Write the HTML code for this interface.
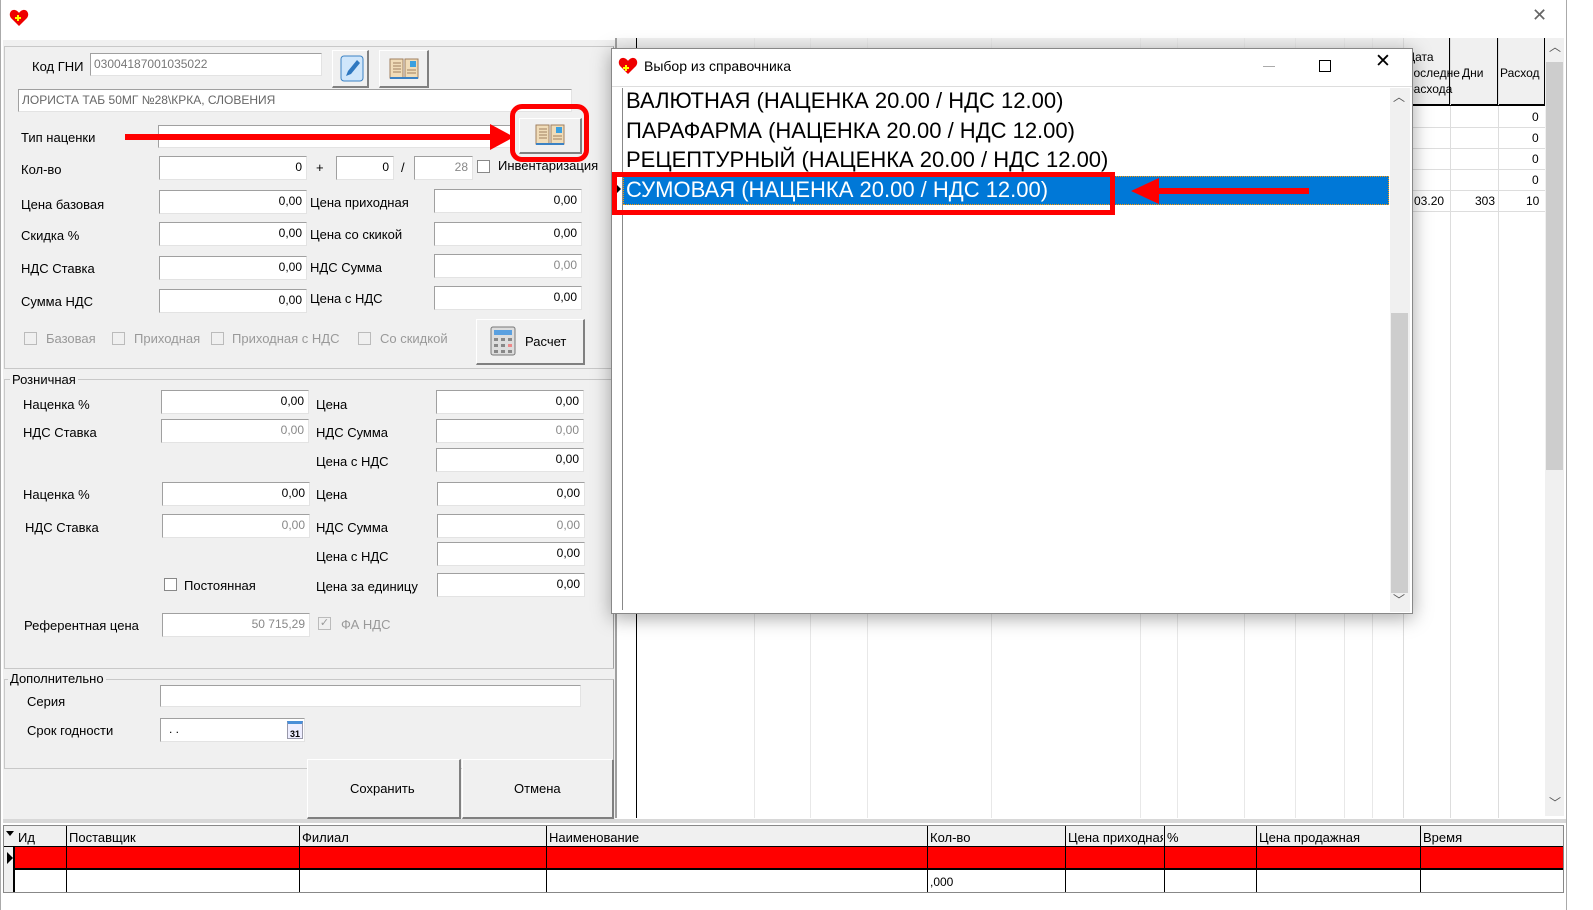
<!DOCTYPE html>
<html><head><meta charset="utf-8">
<style>
*{box-sizing:border-box;margin:0;padding:0}
body{width:1593px;height:910px;position:relative;background:#fff;font-family:"Liberation Sans",sans-serif;font-size:13px;color:#000;overflow:hidden}
.a{position:absolute}
.l{position:absolute;font-size:13px;white-space:nowrap;line-height:15px}
.i{position:absolute;background:#fff;border-top:1px solid #a0a0a0;border-left:1px solid #a0a0a0;border-right:1px solid #e3e3e3;border-bottom:1px solid #e3e3e3;text-align:right;padding-right:4px;font-size:12px;line-height:20px;white-space:nowrap;overflow:hidden}
.g{color:#888}
.cb{position:absolute;width:13px;height:13px;border:1px solid #888;background:#fff}
.cbd{border-color:#bbb;background:#f0f0f0}
.btn{position:absolute;background:#f0f0f0;border-top:1px solid #fff;border-left:1px solid #fff;border-right:2px solid #808080;border-bottom:2px solid #808080}
.vl{position:absolute;width:1px;background:#e8e8e8}
.hd{position:absolute;border-right:1px solid #000;border-bottom:1px solid #000;background:#f0f0f0}
</style></head><body>
<!-- top bar -->
<svg class="a" style="left:9px;top:9px" width="20" height="18" viewBox="0 0 20 18"><path d="M10 17 L2 9 C-1 5 2 0 6 1 C8 1.5 9.5 3 10 4 C10.5 3 12 1.5 14 1 C18 0 21 5 18 9 Z" fill="#e00"/><path d="M6 9h6M9 6v6" stroke="#ff0" stroke-width="2"/></svg>
<div class="l" style="left:1532px;top:8px;font-size:18px;color:#666">✕</div>
<div class="a" style="left:0;top:0;width:1px;height:910px;background:#aaa"></div>
<div class="a" style="left:1566px;top:0;width:1px;height:910px;background:#aaa"></div>

<!-- left panel -->
<div class="a" style="left:3px;top:40px;width:612px;height:782px;background:#f0f0f0"></div>
<div class="a" style="left:4px;top:46px;width:610px;height:323px;border:1px solid #c8c8c8;border-right:1px solid #a0a0a0"></div>
<div class="l" style="left:32px;top:59px">Код ГНИ</div>
<div class="i" style="left:90px;top:53px;width:232px;height:23px;text-align:left;padding-left:3px;color:#777;line-height:21px">03004187001035022</div>
<div class="btn" style="left:332px;top:50px;width:37px;height:38px"></div>
<svg class="a" style="left:340px;top:55px" width="24" height="27" viewBox="0 0 24 27"><rect x="1" y="1" width="22" height="25" rx="3" fill="#cfe6fb" stroke="#3b82c4"/><path d="M6 21 L8 16 L17 5 L20 8 L11 19 Z" fill="#2f78c0"/></svg>
<div class="btn" style="left:379px;top:50px;width:50px;height:38px"></div>
<svg class="a" style="left:388px;top:56px" width="32" height="24" viewBox="0 0 32 24"><path d="M2 3h13v19H2z" fill="#f0dcb8" stroke="#a08060"/><path d="M17 3h13v19H17z" fill="#f0dcb8" stroke="#a08060"/><rect x="22" y="5" width="6" height="6" fill="#3aa0e0"/><path d="M5 7h8M5 10h8M5 13h8M5 16h8M19 14h9M19 17h9" stroke="#a08060"/><path d="M2 22h28" stroke="#3b82c4" stroke-width="2"/></svg>
<div class="i" style="left:18px;top:89px;width:554px;height:23px;text-align:left;padding-left:3px;color:#666;line-height:20px">ЛОРИСТА ТАБ 50МГ №28\КРКА, СЛОВЕНИЯ</div>
<div class="l" style="left:21px;top:130px">Тип наценки</div>
<div class="i" style="left:158px;top:125px;width:357px;height:23px"></div>
<div class="btn" style="left:519px;top:118px;width:63px;height:36px"></div>
<svg class="a" style="left:534px;top:122px" width="32" height="26" viewBox="0 0 32 26"><path d="M2 3h13v19H2z" fill="#f0dcb8" stroke="#a08060"/><path d="M17 3h13v19H17z" fill="#f0dcb8" stroke="#a08060"/><rect x="22" y="5" width="6" height="6" fill="#3aa0e0"/><path d="M5 7h8M5 10h8M5 13h8M5 16h8M19 14h9M19 17h9" stroke="#a08060"/><path d="M2 22h28" stroke="#3b82c4" stroke-width="2"/></svg>
<div class="a" style="left:510px;top:104px;width:79px;height:58px;border:5px solid #f00;border-radius:12px"></div>
<div class="a" style="left:125px;top:134px;width:370px;height:6px;background:#f00"></div>
<svg class="a" style="left:490px;top:124px" width="24" height="26"><path d="M0 0 L24 13 L0 26Z" fill="#f00"/></svg>

<div class="l" style="left:21px;top:162px">Кол-во</div>
<div class="i" style="left:159px;top:156px;width:148px;height:24px">0</div>
<div class="l" style="left:316px;top:160px">+</div>
<div class="i" style="left:336px;top:156px;width:58px;height:24px">0</div>
<div class="l" style="left:401px;top:160px">/</div>
<div class="i g" style="left:414px;top:156px;width:59px;height:24px">28</div>
<div class="cb" style="left:477px;top:160px"></div>
<div class="l" style="left:498px;top:158px">Инвентаризация</div>

<div class="l" style="left:21px;top:197px">Цена базовая</div>
<div class="i" style="left:159px;top:190px;width:148px;height:24px">0,00</div>
<div class="l" style="left:310px;top:195px">Цена приходная</div>
<div class="i" style="left:434px;top:189px;width:148px;height:24px">0,00</div>
<div class="l" style="left:21px;top:228px">Скидка %</div>
<div class="i" style="left:159px;top:222px;width:148px;height:24px">0,00</div>
<div class="l" style="left:310px;top:227px">Цена со скикой</div>
<div class="i" style="left:434px;top:222px;width:148px;height:24px">0,00</div>
<div class="l" style="left:21px;top:261px">НДС Ставка</div>
<div class="i" style="left:159px;top:256px;width:148px;height:24px">0,00</div>
<div class="l" style="left:310px;top:260px">НДС Сумма</div>
<div class="i g" style="left:434px;top:254px;width:148px;height:24px">0,00</div>
<div class="l" style="left:21px;top:294px">Сумма НДС</div>
<div class="i" style="left:159px;top:289px;width:148px;height:24px">0,00</div>
<div class="l" style="left:310px;top:291px">Цена с НДС</div>
<div class="i" style="left:434px;top:286px;width:148px;height:24px">0,00</div>

<div class="cb cbd" style="left:24px;top:332px"></div><div class="l g" style="left:46px;top:331px;color:#999">Базовая</div>
<div class="cb cbd" style="left:112px;top:332px"></div><div class="l" style="left:134px;top:331px;color:#999">Приходная</div>
<div class="cb cbd" style="left:211px;top:332px"></div><div class="l" style="left:232px;top:331px;color:#999">Приходная с НДС</div>
<div class="cb cbd" style="left:358px;top:332px"></div><div class="l" style="left:380px;top:331px;color:#999">Со скидкой</div>
<div class="btn" style="left:476px;top:319px;width:109px;height:46px"></div>
<svg class="a" style="left:490px;top:326px" width="26" height="30"><rect x="1" y="1" width="24" height="28" rx="2" fill="#ddd" stroke="#777"/><rect x="4" y="4" width="18" height="5" fill="#5aa0e0"/><g fill="#888"><rect x="4" y="12" width="4" height="3"/><rect x="11" y="12" width="4" height="3"/><rect x="18" y="12" width="4" height="3"/><rect x="4" y="18" width="4" height="3"/><rect x="11" y="18" width="4" height="3"/><rect x="18" y="18" width="4" height="3" fill="#e88"/><rect x="4" y="24" width="4" height="3"/><rect x="11" y="24" width="4" height="3"/><rect x="18" y="24" width="4" height="3"/></g></svg>
<div class="l" style="left:525px;top:334px">Расчет</div>

<div class="a" style="left:4px;top:379px;width:610px;height:290px;border:1px solid #c8c8c8;border-right:1px solid #a0a0a0"></div>
<div class="l" style="left:10px;top:372px;background:#f0f0f0;padding:0 2px">Розничная</div>
<div class="l" style="left:23px;top:397px">Наценка %</div><div class="i" style="left:161px;top:390px;width:148px;height:24px">0,00</div>
<div class="l" style="left:316px;top:397px">Цена</div><div class="i" style="left:436px;top:390px;width:148px;height:24px">0,00</div>
<div class="l" style="left:23px;top:425px">НДС Ставка</div><div class="i g" style="left:161px;top:419px;width:148px;height:24px">0,00</div>
<div class="l" style="left:316px;top:425px">НДС Сумма</div><div class="i g" style="left:436px;top:419px;width:148px;height:24px">0,00</div>
<div class="l" style="left:316px;top:454px">Цена с НДС</div><div class="i" style="left:436px;top:448px;width:148px;height:24px">0,00</div>
<div class="l" style="left:23px;top:487px">Наценка %</div><div class="i" style="left:162px;top:482px;width:148px;height:24px">0,00</div>
<div class="l" style="left:316px;top:487px">Цена</div><div class="i" style="left:437px;top:482px;width:148px;height:24px">0,00</div>
<div class="l" style="left:25px;top:520px">НДС Ставка</div><div class="i g" style="left:162px;top:514px;width:148px;height:24px">0,00</div>
<div class="l" style="left:316px;top:520px">НДС Сумма</div><div class="i g" style="left:437px;top:514px;width:148px;height:24px">0,00</div>
<div class="l" style="left:316px;top:549px">Цена с НДС</div><div class="i" style="left:437px;top:542px;width:148px;height:24px">0,00</div>
<div class="cb" style="left:164px;top:578px"></div><div class="l" style="left:184px;top:578px">Постоянная</div>
<div class="l" style="left:316px;top:579px">Цена за единицу</div><div class="i" style="left:437px;top:573px;width:148px;height:24px">0,00</div>
<div class="l" style="left:24px;top:618px">Референтная цена</div><div class="i g" style="left:162px;top:613px;width:148px;height:24px">50 715,29</div>
<div class="cb cbd" style="left:318px;top:617px;font-size:11px;line-height:11px;color:#999;text-align:center">✓</div><div class="l" style="left:341px;top:617px;color:#999">ФА НДС</div>

<div class="a" style="left:4px;top:679px;width:610px;height:90px;border:1px solid #c8c8c8;border-right:1px solid #a0a0a0"></div>
<div class="l" style="left:8px;top:671px;background:#f0f0f0;padding:0 2px">Дополнительно</div>
<div class="l" style="left:27px;top:694px">Серия</div><div class="i" style="left:160px;top:685px;width:421px;height:22px"></div>
<div class="l" style="left:27px;top:723px">Срок годности</div><div class="i" style="left:160px;top:718px;width:145px;height:24px;text-align:left;padding-left:8px">. .</div>
<div class="a" style="left:287px;top:721px;width:16px;height:18px;background:#eef;border:1px solid #99a;font-size:9px;font-weight:bold;text-align:center;line-height:20px;border-top:3px solid #4a8fd8">31</div>
<div class="btn" style="left:307px;top:759px;width:154px;height:60px"></div>
<div class="l" style="left:350px;top:781px">Сохранить</div>
<div class="btn" style="left:462px;top:759px;width:152px;height:60px"></div>
<div class="l" style="left:514px;top:781px">Отмена</div>
<div class="a" style="left:3px;top:819px;width:1563px;height:4px;background:#d8d8d8"></div>

<!-- right grid -->
<div class="a" style="left:615px;top:38px;width:2px;height:780px;background:#a0a0a0"></div>
<div class="a" style="left:617px;top:38px;width:928px;height:67px;background:#f0f0f0;border-bottom:1px solid #000"></div>
<div class="vl" style="left:636px;top:38px;height:780px;background:#000"></div>
<div class="vl" style="left:754px;top:38px;height:780px"></div><div class="vl" style="left:810px;top:38px;height:780px"></div><div class="vl" style="left:867px;top:38px;height:780px"></div><div class="vl" style="left:991px;top:38px;height:780px"></div><div class="vl" style="left:1140px;top:38px;height:780px"></div><div class="vl" style="left:1177px;top:38px;height:780px"></div><div class="vl" style="left:1244px;top:38px;height:780px"></div><div class="vl" style="left:1295px;top:38px;height:780px"></div><div class="vl" style="left:1344px;top:38px;height:780px"></div><div class="vl" style="left:1372px;top:38px;height:780px"></div>
<div class="vl" style="left:1403px;top:38px;height:780px;background:#ddd"></div><div class="vl" style="left:1450px;top:38px;height:780px;background:#ddd"></div><div class="vl" style="left:1498px;top:38px;height:780px;background:#ddd"></div>
<div class="a" style="left:1403px;top:38px;width:142px;height:68px;border-bottom:1px solid #000"></div>
<div class="vl" style="left:1449px;top:38px;height:68px;background:#000"></div><div class="vl" style="left:1497px;top:38px;height:68px;background:#000"></div><div class="vl" style="left:1544px;top:38px;height:68px;background:#000"></div>
<div class="l" style="left:1407px;top:49px;font-size:12px;line-height:16px">Дата<br>последне<br>расхода</div>
<div class="l" style="left:1462px;top:66px;font-size:12px">Дни</div>
<div class="l" style="left:1500px;top:66px;font-size:12px">Расход</div>
<div class="a" style="left:1403px;top:127px;width:142px;height:1px;background:#ddd"></div>
<div class="a" style="left:1403px;top:148px;width:142px;height:1px;background:#ddd"></div>
<div class="a" style="left:1403px;top:169px;width:142px;height:1px;background:#ddd"></div>
<div class="a" style="left:1403px;top:190px;width:142px;height:1px;background:#ddd"></div>
<div class="a" style="left:1403px;top:211px;width:142px;height:1px;background:#ddd"></div>
<div class="l" style="left:1532px;top:110px;font-size:12px">0</div>
<div class="l" style="left:1532px;top:131px;font-size:12px">0</div>
<div class="l" style="left:1532px;top:152px;font-size:12px">0</div>
<div class="l" style="left:1532px;top:173px;font-size:12px">0</div>
<div class="l" style="left:1404px;top:194px;font-size:12px">3.03.20</div>
<div class="l" style="left:1475px;top:194px;font-size:12px">303</div>
<div class="l" style="left:1526px;top:194px;font-size:12px">10</div>
<div class="a" style="left:1545px;top:38px;width:19px;height:778px;background:#f0f0f0"></div>
<div class="a" style="left:1546px;top:62px;width:17px;height:408px;background:#cdcdcd"></div>
<div class="l" style="left:1549px;top:40px;font-size:12px;color:#555">︿</div>
<div class="l" style="left:1549px;top:796px;font-size:12px;color:#555">﹀</div>

<!-- dialog -->
<div class="a" style="left:611px;top:48px;width:802px;height:566px;background:#fff;border:1px solid #888;box-shadow:0 4px 18px rgba(0,0,0,.35)"></div>
<svg class="a" style="left:618px;top:57px" width="20" height="18" viewBox="0 0 20 18"><path d="M10 17 L2 9 C-1 5 2 0 6 1 C8 1.5 9.5 3 10 4 C10.5 3 12 1.5 14 1 C18 0 21 5 18 9 Z" fill="#e00"/><path d="M5 11h6M8 8v6" stroke="#ff0" stroke-width="2"/></svg>
<div class="l" style="left:644px;top:59px;font-size:14px">Выбор из справочника</div>
<div class="a" style="left:1263px;top:66px;width:12px;height:1px;background:#aaa"></div>
<div class="a" style="left:1319px;top:60px;width:12px;height:12px;border:1px solid #000"></div>
<div class="l" style="left:1375px;top:54px;font-size:19px;font-weight:300">✕</div>
<div class="a" style="left:612px;top:86px;width:800px;height:1px;background:#ddd"></div>
<div class="a" style="left:622px;top:88px;width:1px;height:522px;background:#888"></div>
<div class="a" style="left:1390px;top:88px;width:20px;height:524px;background:#f0f0f0"></div>
<div class="a" style="left:1391px;top:313px;width:17px;height:280px;background:#cdcdcd"></div>
<div class="l" style="left:1393px;top:90px;font-size:12px;color:#555">︿</div>
<div class="l" style="left:1393px;top:593px;font-size:12px;color:#555">﹀</div>
<div class="l" style="left:626px;top:88px;font-size:22px;line-height:26px">ВАЛЮТНАЯ (НАЦЕНКА 20.00 / НДС 12.00)</div>
<div class="l" style="left:626px;top:118px;font-size:22px;line-height:26px">ПАРАФАРМА (НАЦЕНКА 20.00 / НДС 12.00)</div>
<div class="l" style="left:626px;top:147px;font-size:22px;line-height:26px">РЕЦЕПТУРНЫЙ (НАЦЕНКА 20.00 / НДС 12.00)</div>
<div class="a" style="left:623px;top:176px;width:766px;height:29px;background:#0078d7;border:1px dotted #f90"></div>
<div class="l" style="left:626px;top:177px;font-size:22px;line-height:26px;color:#fff">СУМОВАЯ (НАЦЕНКА 20.00 / НДС 12.00)</div>
<svg class="a" style="left:615px;top:183px" width="6" height="12"><path d="M0 0L6 6L0 12Z" fill="#000"/></svg>
<div class="a" style="left:612px;top:172px;width:503px;height:43px;border:5px solid #f00"></div>
<div class="a" style="left:1155px;top:188px;width:154px;height:6px;background:#f00"></div>
<svg class="a" style="left:1131px;top:178px" width="28" height="26"><path d="M0 13 L28 0 L28 26Z" fill="#f00"/></svg>

<!-- bottom grid -->
<div class="a" style="left:3px;top:825px;width:1561px;height:68px;background:#fff;border:1px solid #888"></div>
<div class="a" style="left:4px;top:826px;width:1559px;height:21px;background:#f0f0f0;border-bottom:1px solid #000"></div>
<div class="a" style="left:15px;top:847px;width:1548px;height:21px;background:#f00"></div>
<div class="a" style="left:4px;top:868px;width:1559px;height:2px;background:#000"></div>
<div class="a" style="left:4px;top:847px;width:11px;height:45px;background:#f0f0f0;border-right:2px solid #000"></div>
<svg class="a" style="left:6px;top:831px" width="8" height="6"><path d="M0 0H8L4 5Z" fill="#000"/></svg>
<svg class="a" style="left:7px;top:852px" width="6" height="12"><path d="M0 0L6 6L0 12Z" fill="#000"/></svg>
<div class="a" style="left:66px;top:826px;width:1px;height:66px;background:#000"></div>
<div class="a" style="left:299px;top:826px;width:1px;height:66px;background:#000"></div>
<div class="a" style="left:546px;top:826px;width:1px;height:66px;background:#000"></div>
<div class="a" style="left:927px;top:826px;width:1px;height:66px;background:#000"></div>
<div class="a" style="left:1065px;top:826px;width:1px;height:66px;background:#000"></div>
<div class="a" style="left:1164px;top:826px;width:1px;height:66px;background:#000"></div>
<div class="a" style="left:1256px;top:826px;width:1px;height:66px;background:#000"></div>
<div class="a" style="left:1420px;top:826px;width:1px;height:66px;background:#000"></div>
<div class="l" style="left:18px;top:830px">Ид</div>
<div class="l" style="left:69px;top:830px">Поставщик</div>
<div class="l" style="left:302px;top:830px">Филиал</div>
<div class="l" style="left:549px;top:830px">Наименование</div>
<div class="l" style="left:930px;top:830px">Кол-во</div>
<div class="l" style="left:1068px;top:830px;width:95px;overflow:hidden">Цена приходная</div>
<div class="l" style="left:1167px;top:830px">%</div>
<div class="l" style="left:1259px;top:830px">Цена продажная</div>
<div class="l" style="left:1423px;top:830px">Время</div>
<div class="l" style="left:930px;top:875px;font-size:12px">,000</div>
</body></html>
